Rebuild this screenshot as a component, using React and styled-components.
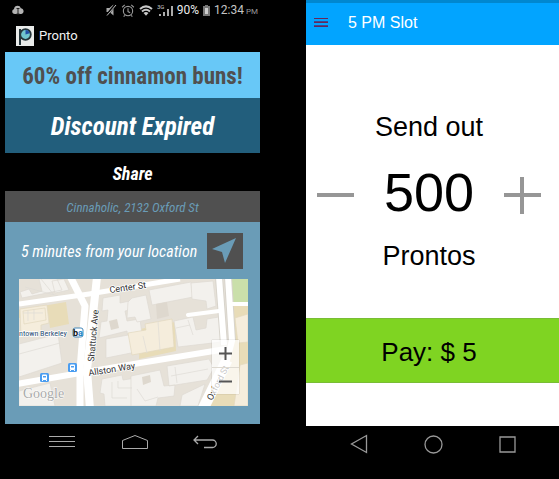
import React, { useState } from "react";
import styled, { createGlobalStyle } from "styled-components";

const GlobalStyle = createGlobalStyle`
  * { box-sizing: border-box; }
  body { margin: 0; background: #000; }
  button { border: 0; padding: 0; margin: 0; background: none; font: inherit; color: inherit; cursor: pointer; }
  h1, h2, p { margin: 0; font-weight: inherit; font-size: inherit; }
  svg { display: block; }
`;

const Page = styled.main`
  display: grid;
  grid-template-columns: 255fr 253fr;
  column-gap: 46px;
  padding-left: 5px;
  min-height: 100vh;
  background: #000;
  align-items: start;
`;

const Phone = styled.section`
  display: flex;
  flex-direction: column;
  min-width: 0;
  font-family: ${(p) => p.$font};
`;

const StatusBar = styled.header`
  display: flex;
  align-items: center;
  gap: 4px;
  height: 20px;
  padding: 0 2px 0 7px;
  color: #c4c4c4;
  font: 12px/20px Roboto, sans-serif;
`;

const Spacer = styled.span`
  flex: 1;
`;

const StatusText = styled.span`
  display: flex;
  align-items: baseline;
  gap: 2px;
  color: ${(p) => (p.$bright ? "#ececec" : "#c4c4c4")};
  white-space: nowrap;
  small { font-size: 8px; line-height: 10px; color: #999; }
`;

const AppTitle = styled.div`
  display: flex;
  align-items: center;
  gap: 5px;
  height: 32px;
  padding-left: 11px;
  color: #f2f2f2;
  font: 13px/18px Roboto, sans-serif;
`;

const Band = styled.div`
  display: flex;
  align-items: center;
  justify-content: center;
  height: ${(p) => p.$height}px;
  padding-top: 2px;
  background: ${(p) => p.$bg};
  color: ${(p) => p.$color};
  font-size: ${(p) => p.$size}px;
  font-weight: ${(p) => p.$weight || 400};
  font-style: ${(p) => (p.$italic ? "italic" : "normal")};
  white-space: nowrap;
`;

const Location = styled.div`
  display: flex;
  flex-direction: column;
  gap: 10px;
  padding: 11px 12px 18px 14px;
  background: #6a9cb7;
`;

const Distance = styled.div`
  display: flex;
  align-items: center;
  justify-content: space-between;
  padding: 0 5px 0 2px;
  color: #fff;
  font-size: 16px;
  font-style: italic;
  white-space: nowrap;
`;

const DirectionsButton = styled.button`
  width: 36px;
  height: 36px;
  flex: none;
  background: #505050;
`;

const MapFrame = styled.div`
  position: relative;
  height: 127px;
  overflow: hidden;
`;

const ZoomControl = styled.div`
  position: absolute;
  right: 9px;
  bottom: 12px;
  display: grid;
  width: 27px;
  background: rgba(255, 255, 255, 0.72);
  box-shadow: 0 0 1px rgba(0, 0, 0, 0.3);
`;

const ZoomButton = styled.button`
  display: grid;
  place-items: center;
  height: 27px;
  & + & { border-top: 1px solid #ddd9d0; }
`;

const NavBar = styled.nav`
  display: flex;
  justify-content: space-between;
  align-items: center;
  height: 36px;
  padding: 0 42px 0 43px;
`;

const TopBar = styled.header`
  display: flex;
  align-items: center;
  gap: 20px;
  height: 45px;
  padding: 0 8px 2px;
  border-top: 3px solid #0187cf;
  background: #02a4ff;
  color: #fff;
  font-size: 16px;
`;

const SlotBody = styled.div`
  display: flex;
  flex-direction: column;
  height: 273px;
  padding: 66px 18px 0 11px;
  background: #fff;
  color: #000;
  text-align: center;
`;

const SlotLabel = styled.p`
  font-size: 27px;
  line-height: 32px;
`;

const Counter = styled.div`
  display: flex;
  align-items: center;
  justify-content: space-between;
  height: 97px;
  padding-top: 7px;
`;

const Amount = styled.output`
  padding-bottom: 7px;
  font-size: 54px;
  line-height: 60px;
`;

const PayButton = styled.button`
  height: 65px;
  padding: 3px 7px 0 0;
  background: #7fd422;
  box-shadow: inset 0 1px #79bd35, inset 0 -1px #79bd35;
  color: #000;
  font-size: 26px;
`;

const SlotFooter = styled.div`
  height: 43px;
  background: #fff;
`;

const SlotNav = styled(NavBar)`
  padding: 0 43px 0 44px;
`;

function PhoneStatus() {
  return (
    <StatusBar>
      <svg width="12" height="10" viewBox="0 0 12 10">
        <path d="M3 9C-.5 9-.5 4.500 2 4.200 2-.2 8.500-.2 8.700 3.200 12.500 3.500 12.500 9 9 9Z" fill="#b3b3b3" />
        <path d="M4.500 3.500h3M6 3.500V9M4.500 9h3" stroke="#222" />
      </svg>
      <Spacer />
      <svg width="12" height="12" viewBox="0 0 11 12">
        <path d="M1 4h3l4-3.500v11L4 8H1Z" fill="#aaa" />
        <path d="M10 .5 1 11.500" stroke="#050505" strokeWidth="2.400" />
        <path d="M10.500 1 1.500 11.500" stroke="#bbb" strokeWidth="1" />
      </svg>
      <svg width="14" height="13" viewBox="0 0 12 12" fill="none" stroke="#999">
        <circle cx="6" cy="6.500" r="4.300" />
        <path d="M6 4v3l2 1M.6 3 3 .8M11.400 3 9 .8M3 10.500l-1 1.200M9 10.500l1 1.200" />
      </svg>
      <svg width="14" height="11" viewBox="0 0 14 11" fill="none" stroke="#c8c8c8" strokeWidth="2">
        <path d="M1 4Q7-1.200 13 4M3 6.500Q7 3 11 6.500" />
        <path d="M4.500 8Q7 6 9.500 8L7 10.800Z" fill="#c8c8c8" stroke="none" />
      </svg>
      <svg width="16" height="13" viewBox="0 0 16 13">
        <text x="0" y="5" fontSize="6" fontFamily="Roboto, sans-serif" fill="#ccc">3G</text>
        <path d="M2 10h2v2H2ZM6 8h2v4H6ZM10 5h2v7h-2ZM14 2h2v10h-2Z" fill="#aaa" />
      </svg>
      <StatusText $bright>90%</StatusText>
      <svg width="7" height="11" viewBox="0 0 7 11">
        <path d="M2 0h3v1h2v10H0V1h2Z" fill="#777" />
        <path d="M2 3h3v6H2Z" fill="#ccc" />
      </svg>
      <StatusText>12:34<small>PM</small></StatusText>
    </StatusBar>
  );
}

function Logo() {
  return (
    <svg width="18" height="20" viewBox="0 0 18 20">
      <rect width="18" height="20" fill="#e9ebea" />
      <path d="M4 3v16" stroke="#26363c" strokeWidth="2" />
      <circle cx="9.500" cy="8.500" r="5.300" fill="#70c5cf" stroke="#26363c" strokeWidth="1.800" />
      <path d="M9.500 8.500V4.100a4.400 4.400 0 0 1 4.200 3.200Z" fill="#214da6" />
    </svg>
  );
}

function BusStop({ x, y }) {
  return (
    <g transform={`translate(${x} ${y})`}>
      <rect width="9" height="9" rx="1.500" fill="#4b9df0" />
      <rect x="2" y="1.500" width="5" height="5.500" rx="1" fill="#fff" />
      <path d="M3 3h3v1.500H3Z" fill="#4b9df0" />
      <path d="M2.500 7v1M6.500 7v1" stroke="#fff" />
    </g>
  );
}

function StreetMap() {
  return (
    <svg width="100%" height="127" viewBox="0 0 229 127" preserveAspectRatio="xMidYMid slice" role="img" aria-label="Map of Oxford Street">
      <rect width="229" height="127" fill="#e6e1d8" />
      <path d="M0 31 47 23 50 45 31 49 29 35 0 39ZM121 50l35-7 1 29-37 8ZM213 27h16v100h-41l20-43Z" fill="#e8dcb8" />
      <g fill="#f3f1ed" stroke="#dedad2" strokeWidth=".7">
        <path d="M1 13 10 10 13 15 23 12 20 0 38 0 43 11 3 19ZM33 2l12-2 5 11-14 3Z" />
        <path d="M0 65 39 55 43 84 0 98ZM0 112l31-8 5 23H0Z" />
        <path d="M84 19l17-3v8l20-4 2 8-17 4 2 10 13-2 2 16-14 3-1-7-28 7 2-16 6-1 1-11-6 1Z" />
        <path d="M87 60l28-5 2 18-30 6ZM83 100l20-4 1 5 13-2 3 28H86l-1-12-4-1Z" />
        <path d="M113 19l14-3 5 24-14 3-2-5-8 1 1-16ZM130 11l42-8 2 15-41 8Z" />
        <path d="M172 4l22-2 3 25-9 3-1-8-14-2ZM155 42l19-4 3 13 10-2 1-9 12-2 2 25-43 5Z" />
        <path d="M148 87l42-7 5 9-7 12-38 6ZM112 97l29-6 4 16 11-1-1 11-16 2-2 8h-25ZM163 116l23-11-7 22h-18Z" />
      </g>
      <g fill="#f5eddc" stroke="#e3d8bf" strokeWidth=".7">
        <path d="M1 30 28 26l2 18-8 2v8L2 58ZM4 32l22-3 1 12-22 4Z" />
        <path d="M109 54l18-3-1-6 27-5 2 28-42 8ZM216 39l13-4v28l-10 1ZM221 86l8-2v43h-14Z" />
      </g>
      <path d="M123 98l8-2 1 7-8 3ZM29 19l12-2v4l-13 2ZM90 42l8-2 2 9-8 2ZM137 25l11-2 2 14-12 3Z" fill="#ded8ce" />
      <g fill="none" stroke="#dedbd5" strokeWidth=".7">
        <path d="M4 34h20M9 31v11M15 30v11M22 0 35 16M93 103v16h15M99 102v7h14M124 57l4 17M139 42l2 30M157 49l14-3M152 97l37-7M156 88l2 16M118 110l8 12 13-4M169 41l5 15M0 75l41-11M6 8l33 9" />
      </g>
      <path d="M212 0h17v23h-15Z" fill="#cadfaa" />
      <path d="M200-2 205 66M209-2 213 62" stroke="#d8d4cc" strokeWidth="8" fill="none" />
      <g fill="none" stroke="#fff" strokeLinejoin="round">
        <path d="M0 25 70 15 161 0" strokeWidth="5" />
        <path d="M51-3 66 27 61 91 61 130" strokeWidth="7" />
        <path d="M78-2 68 91 71 130" strokeWidth="8" />
        <path d="M-2 105 61 94 121 84 207 70" strokeWidth="6" />
        <path d="M200-2 205 66M209-2 213 62 208 81 184 130" strokeWidth="6" />
        <path d="M208 81 184 130" strokeWidth="11" />
        <path d="M169 36 200 32M211 25h18" strokeWidth="4" strokeLinecap="round" />
      </g>
      <g fontFamily="Roboto, sans-serif" fontSize="9" fill="#333" stroke="#fff" strokeWidth="1.500" paintOrder="stroke">
        <text transform="translate(91 14) rotate(-8)">Center St</text>
        <text transform="translate(75 83) rotate(-85)">Shattuck Ave</text>
        <text transform="translate(70 97) rotate(-9)">Allston Way</text>
        <text transform="translate(193 122) rotate(-63)">Oxford St</text>
        <text x="0" y="57" fontSize="8" fontFamily="Roboto Condensed, Roboto, sans-serif" fill="#294e75">ntown Berkeley</text>
      </g>
      <rect x="54" y="49" width="10" height="9" rx="2" fill="#fff" stroke="#4688b9" />
      <text x="54" y="57" fontFamily="Roboto, sans-serif" fontSize="9" fontWeight="700" fill="#111">b<tspan fill="#1784c7">a</tspan></text>
      <BusStop x={49} y={84} />
      <BusStop x={21} y={94} />
      <text x="4" y="119" fontFamily="Liberation Serif, serif" fontSize="14" fill="#aaa" stroke="#fff" strokeWidth="1" paintOrder="stroke">Google</text>
    </svg>
  );
}

function DealPhone() {
  return (
    <Phone $font='"Roboto Condensed", Roboto, sans-serif'>
      <PhoneStatus />
      <AppTitle><Logo /><h1>Pronto</h1></AppTitle>
      <Band as="h2" $height={46} $bg="#68c8f7" $color="#505050" $size={23} $weight={700}>60% off cinnamon buns!</Band>
      <Band $height={55} $bg="#225e7c" $color="#fff" $size={25} $weight={700} $italic>Discount Expired</Band>
      <Band as="button" $height={38} $bg="#000" $color="#fff" $size={18} $weight={700} $italic>Share</Band>
      <Band $height={31} $bg="#505050" $color="#6a9cb7" $size={13} $italic>Cinnaholic, 2132 Oxford St</Band>
      <Location>
        <Distance>
          <p>5 minutes from your location</p>
          <DirectionsButton aria-label="Directions">
            <svg width="36" height="36" viewBox="0 0 36 36">
              <path d="M29 5 5 16 15 19 18 30Z" fill="#6a9cb7" />
            </svg>
          </DirectionsButton>
        </Distance>
        <MapFrame>
          <StreetMap />
          <ZoomControl>
            <ZoomButton aria-label="Zoom in">
              <svg width="13" height="13" viewBox="0 0 13 13"><path d="M6.500 0v13M0 6.500h13" stroke="#555" strokeWidth="2" /></svg>
            </ZoomButton>
            <ZoomButton aria-label="Zoom out">
              <svg width="13" height="13" viewBox="0 0 13 13"><path d="M0 6.500h13" stroke="#555" strokeWidth="2" /></svg>
            </ZoomButton>
          </ZoomControl>
        </MapFrame>
      </Location>
      <NavBar aria-label="System">
        <button aria-label="Menu">
          <svg width="28" height="14" viewBox="0 0 28 14"><path d="M1 1.500h26M1 6.500h26M1 11.500h26" stroke="#aaa" /></svg>
        </button>
        <button aria-label="Home">
          <svg width="28" height="16" viewBox="0 0 28 16"><path d="M1.500 14.500v-8L14 1.500l12.500 5v8Z" fill="none" stroke="#aaa" /></svg>
        </button>
        <button aria-label="Back">
          <svg width="25" height="14" viewBox="0 0 25 14"><path d="M5 1 1 5l4 4M1 5h18.500a3.500 3.500 0 0 1 0 7.500H11" fill="none" stroke="#aaa" strokeWidth="1.300" /></svg>
        </button>
      </NavBar>
    </Phone>
  );
}

function SlotPhone() {
  const [amount, setAmount] = useState(500);
  return (
    <Phone $font='"Liberation Sans", Arial, sans-serif'>
      <TopBar>
        <button aria-label="Menu">
          <svg width="14" height="10" viewBox="0 0 14 10">
            <path d="M0 .5h14M0 4.500h14M0 8.500h14" stroke="#672658" strokeWidth="1" />
            <path d="M0 3.500h14M0 7.500h14" stroke="#40488c" strokeWidth="1" />
          </svg>
        </button>
        <h1>5 PM Slot</h1>
      </TopBar>
      <SlotBody>
        <SlotLabel>Send out</SlotLabel>
        <Counter>
          <button aria-label="Fewer" onClick={() => setAmount(Math.max(0, amount - 100))}>
            <svg width="37" height="37" viewBox="0 0 37 37"><path d="M0 18h37" stroke="#969696" strokeWidth="4" /></svg>
          </button>
          <Amount>{amount}</Amount>
          <button aria-label="More" onClick={() => setAmount(amount + 100)}>
            <svg width="37" height="37" viewBox="0 0 37 37"><path d="M18 0v37M0 18h37" stroke="#969696" strokeWidth="4" /></svg>
          </button>
        </Counter>
        <SlotLabel>Prontos</SlotLabel>
      </SlotBody>
      <PayButton>Pay: $ {amount / 100}</PayButton>
      <SlotFooter />
      <SlotNav aria-label="System">
        <button aria-label="Back">
          <svg width="18" height="20" viewBox="0 0 18 20"><path d="M16.500 1.500v17L1.500 10Z" fill="none" stroke="#999" strokeWidth="1.300" /></svg>
        </button>
        <button aria-label="Home">
          <svg width="19" height="19" viewBox="0 0 19 19"><circle cx="9.500" cy="9.500" r="8.500" fill="none" stroke="#999" strokeWidth="1.300" /></svg>
        </button>
        <button aria-label="Recent apps">
          <svg width="17" height="17" viewBox="0 0 17 17"><path d="M1 1h15v15H1Z" fill="none" stroke="#999" strokeWidth="1.300" /></svg>
        </button>
      </SlotNav>
    </Phone>
  );
}

export default function App() {
  return (
    <>
      <GlobalStyle />
      <Page>
        <DealPhone />
        <SlotPhone />
      </Page>
    </>
  );
}
